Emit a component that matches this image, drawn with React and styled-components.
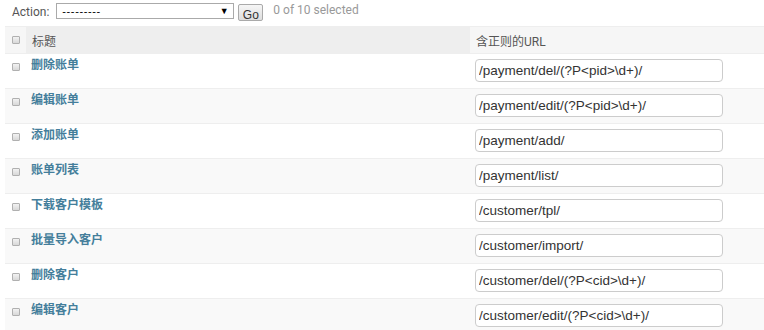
import React from "react";
import styled, { createGlobalStyle } from "styled-components";

const Global = createGlobalStyle`
  html, body { margin: 0; padding: 0; background: #fff; }
  body {
    font-family: Roboto, "Noto Sans CJK SC", "Liberation Sans", sans-serif;
    font-size: 12px;
    color: #333;
    overflow: hidden;
  }
`;

const Page = styled.div`
  padding-left: 5px;
`;

const Actions = styled.div`
  display: flex;
  align-items: center;
  height: 26px;
  padding-left: 7px;
`;

const ActionLabel = styled.span`
  font-size: 12px;
  color: #555;
  margin-right: 7px;
  margin-top: -2px;
`;

const Select = styled.div`
  box-sizing: border-box;
  width: 178px;
  height: 16px;
  border: 1px solid #aaa;
  background: #fff;
  display: flex;
  align-items: center;
  justify-content: space-between;
  padding: 0 4px 0 5px;
  margin-top: -4px;
  font-family: "Liberation Sans", Arial, sans-serif;
  font-size: 11px;
  letter-spacing: 0.6px;
  color: #000;
`;

const Arrow = styled.span`
  font-size: 9px;
  color: #000;
`;

const GoButton = styled.button`
  box-sizing: border-box;
  margin-left: 4px;
  width: 25px;
  height: 17px;
  padding: 3px 0 0;
  border: 1px solid #aaa;
  border-radius: 2px;
  background: linear-gradient(#f6f6f6, #dedede);
  font-family: "Liberation Sans", Arial, sans-serif;
  font-size: 12px;
  color: #333;
  line-height: 15px;
  margin-top: -1px;
`;

const Counter = styled.span`
  margin-left: 10px;
  margin-top: -6px;
  font-size: 12px;
  color: #999;
`;

const Table = styled.table`
  border-collapse: collapse;
  table-layout: fixed;
  width: 759px;
`;

const HeadCell = styled.th`
  background: ${(p) => (p.$sorted ? "#eee" : "#f6f6f6")};
  border-top: 1px solid #eee;
  border-bottom: 1px solid #eee;
  height: 27px;
  box-sizing: border-box;
  padding: 0 ${(p) => (p.$check ? "0" : "6px")};
  text-align: left;
  font-weight: normal;
  font-size: 12px;
  color: #555;
  width: ${(p) => p.$w || "auto"};
  vertical-align: middle;
`;

const Row = styled.tr`
  background: ${(p) => (p.$alt ? "#f9f9f9" : "#fff")};
  border-bottom: 1px solid #eee;
`;

const Cell = styled.td`
  height: 35px;
  box-sizing: border-box;
  padding: ${(p) => (p.$check ? "0" : "3px 6px 0")};
  vertical-align: top;
`;

const CheckWrap = styled.div`
  display: flex;
  justify-content: center;
  padding-top: ${(p) => (p.$head ? "0" : "9px")};
`;

const Check = styled.span`
  display: block;
  box-sizing: border-box;
  width: 8px;
  height: 8px;
  border: 1px solid #b0b0b0;
  border-radius: 1px;
  background: linear-gradient(#f2f2f2, #d8d8d8);
`;

const TitleLink = styled.a`
  display: inline-block;
  font-weight: bold;
  font-size: 12px;
  color: #447e9b;
  text-decoration: none;
  margin-left: -1px;
  line-height: 16px;
`;

const UrlInput = styled.input`
  box-sizing: border-box;
  display: block;
  width: 248px;
  height: 23px;
  margin: 2px 0 0 -1px;
  border: 1px solid #ccc;
  border-radius: 4px;
  padding: 0 3px;
  font-family: "Liberation Sans", Arial, sans-serif;
  font-size: 13.5px;
  color: #333;
  background: #fff;
`;

const rows = [
  ["删除账单", "/payment/del/(?P<pid>\\d+)/"],
  ["编辑账单", "/payment/edit/(?P<pid>\\d+)/"],
  ["添加账单", "/payment/add/"],
  ["账单列表", "/payment/list/"],
  ["下载客户模板", "/customer/tpl/"],
  ["批量导入客户", "/customer/import/"],
  ["删除客户", "/customer/del/(?P<cid>\\d+)/"],
  ["编辑客户", "/customer/edit/(?P<cid>\\d+)/"],
];

export default function App() {
  return (
    <Page>
      <Global />
      <Actions>
        <ActionLabel>Action:</ActionLabel>
        <Select>
          <span>---------</span>
          <Arrow>▼</Arrow>
        </Select>
        <GoButton>Go</GoButton>
        <Counter>0 of 10 selected</Counter>
      </Actions>
      <Table>
        <thead>
          <tr>
            <HeadCell $check $w="21px">
              <CheckWrap $head>
                <Check />
              </CheckWrap>
            </HeadCell>
            <HeadCell $sorted $w="444px">标题</HeadCell>
            <HeadCell>含正则的URL</HeadCell>
          </tr>
        </thead>
        <tbody>
          {rows.map(([t, u], i) => (
            <Row key={i} $alt={i % 2 === 1}>
              <Cell $check>
                <CheckWrap>
                  <Check />
                </CheckWrap>
              </Cell>
              <Cell>
                <TitleLink href="#">{t}</TitleLink>
              </Cell>
              <Cell>
                <UrlInput defaultValue={u} />
              </Cell>
            </Row>
          ))}
        </tbody>
      </Table>
    </Page>
  );
}
